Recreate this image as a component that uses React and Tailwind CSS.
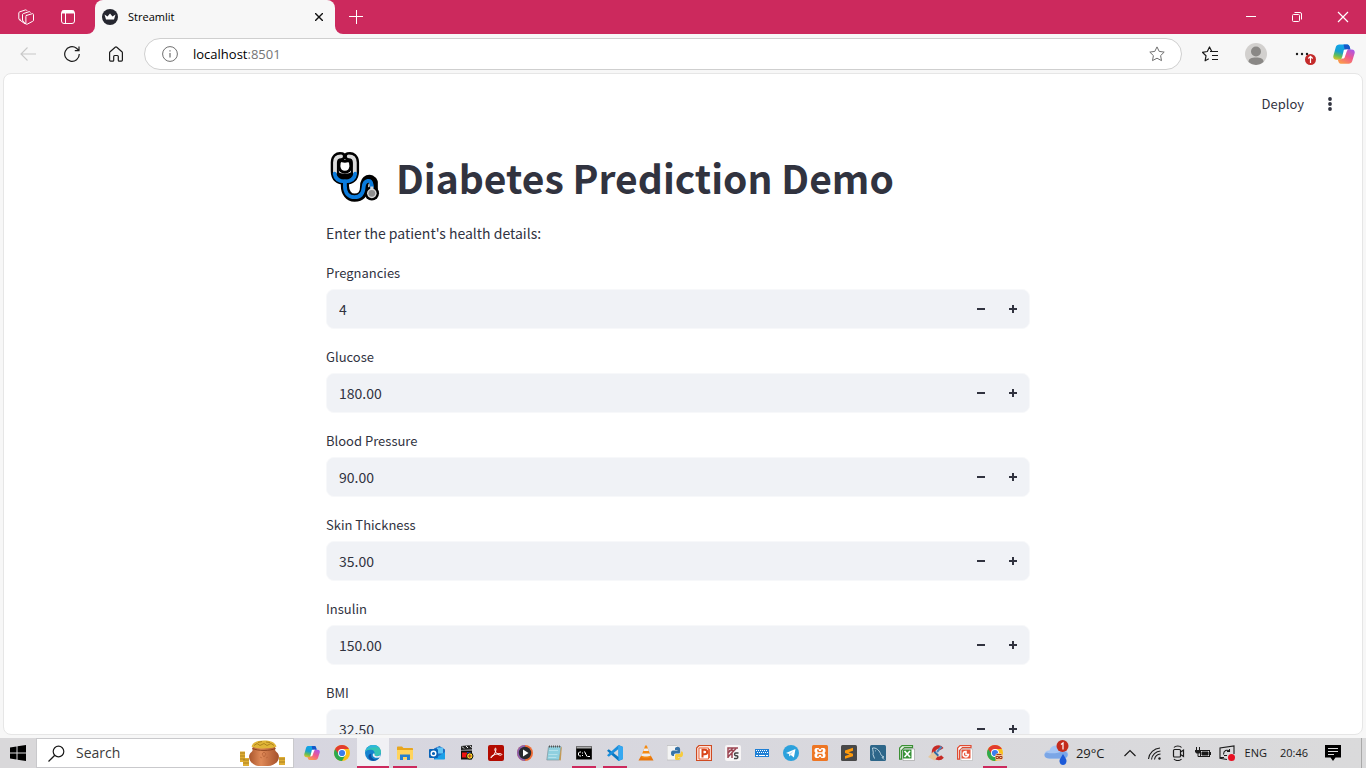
import { useState } from "react";

const UI = "font-['Open_Sans','Noto_Sans',sans-serif]";
const APP = "font-['Noto_Sans_CJK_SC','Open_Sans',sans-serif]";

const FIELDS = [
  { id: "pregnancies", label: "Pregnancies", start: 4, digits: 0 },
  { id: "glucose", label: "Glucose", start: 180, digits: 2 },
  { id: "blood-pressure", label: "Blood Pressure", start: 90, digits: 2 },
  { id: "skin-thickness", label: "Skin Thickness", start: 35, digits: 2 },
  { id: "insulin", label: "Insulin", start: 150, digits: 2 },
  { id: "bmi", label: "BMI", start: 32.5, digits: 2 },
];

function Svg({ size = "size-4", box = 16, children, ...rest }) {
  return (
    <svg className={`${size} shrink-0`} viewBox={`0 0 ${box} ${box}`} fill="none" aria-hidden="true" {...rest}>
      {children}
    </svg>
  );
}

function CopilotLogo({ size, id }) {
  return (
    <Svg size={size} box={24}>
      <defs>
        <linearGradient id={`${id}a`} x1="8" y1="1" x2="3" y2="19" gradientUnits="userSpaceOnUse">
          <stop stopColor="#12a5ee" />
          <stop offset=".45" stopColor="#15a0d0" />
          <stop offset=".7" stopColor="#62bd58" />
          <stop offset="1" stopColor="#f7c51f" />
        </linearGradient>
        <linearGradient id={`${id}b`} x1="20" y1="6" x2="11" y2="23" gradientUnits="userSpaceOnUse">
          <stop stopColor="#a557ef" />
          <stop offset=".5" stopColor="#f0588c" />
          <stop offset="1" stopColor="#fb9b4b" />
        </linearGradient>
      </defs>
      <path d="M7 1.500h8.500c1.600 0 2.200 1 2.700 2.600L19 7h-3.500c-1.500 0-2.300.8-2.800 2.400L10.500 16c-.5 1.500-1.200 2.200-2.800 2.200H3.500C.8 18.200-.2 16 .5 13.500L3 4.500c.6-2 1.900-3 4-3z" fill={`url(#${id}a)`} />
      <path d="M11.500 1.500h4c1.600 0 2.200 1 2.700 2.600L19 7h-3.500c-1.200 0-2 .5-2.500 1.600L11.500 1.500z" fill="#1657c8" />
      <path d="M17 22.500H8.500c-1.600 0-2.200-1-2.700-2.600L5.200 18h2.500c1.600 0 2.300-.8 2.800-2.300l2.200-6.600C13.200 7.600 14 7 15.500 7h5c2.700 0 3.700 2 3 4.500L21 19.500c-.6 2-1.900 3-4 3z" fill={`url(#${id}b)`} />
      <path d="M11.800 7.500c1-.6 3-.5 4.700-.3-1 .8-1.500 2-2 3.500l-1.800 5c-.4 1-1.500 1.500-4.200 1.300 1-.5 1.300-1 1.700-2.500z" fill="#fff" />
    </Svg>
  );
}

function Stethoscope() {
  return (
    <svg className="size-[50px] shrink-0" viewBox="0 0 52 52" fill="none" role="img" aria-label="Stethoscope">
      <g strokeLinecap="round" strokeLinejoin="round">
        <path d="M12 4.500C8 3.500 5 6 5 11v9c0 7 4 10 10.500 10S26 27 26 20v-9c0-5-3-7.500-7-6.500" stroke="#000" strokeWidth="8.500" />
        <path d="M15.500 31v4c0 7 4 12.500 10 12.500s10-3 10-11.500 7-11 10-4.500v9" stroke="#000" strokeWidth="8.500" />
        <circle cx="43.500" cy="43" r="7.500" fill="#000" />
        <path d="M11.500 4.500C7.500 4.500 5.200 6.500 5.200 11v10M19.500 4.500c4 0 6.300 2 6.300 6.500v10" stroke="#dcdcdc" strokeWidth="4" />
        <path d="M4.800 22.500c.7 5.500 4.500 8 10.700 8s10-2.500 10.700-8" stroke="#0a7bdc" strokeWidth="4" />
        <path d="M15.500 30.500v5c0 7 4 11.500 10 11.500s9-3.500 9.500-10.500 8-9.500 8.500-1.500v2" stroke="#0a7bdc" strokeWidth="4" />
        <path d="M7.500 20c2.500 2 5 2.500 8 2.500s5.500-.5 8-2.500c0 5.500-2.500 8-8 8s-8-2.500-8-8z" fill="#000" />
        <path d="M11.500 8.500c-2 1.500-2.700 3.500-2.200 6.500.5 4 2.700 6 6.200 6s5.700-2 6.200-6c.4-3-.4-5-2.200-6.500-1.200 1.500-6.800 1.500-8 0z" fill="#fff" stroke="#000" strokeWidth="3" />
      </g>
      <path d="M43.500 36v3" stroke="#d5d5d5" strokeWidth="3" />
      <circle cx="43.500" cy="43" r="5" fill="#d5d5d5" />
      <circle cx="43.500" cy="43" r="3.500" fill="#8f8f8f" />
    </svg>
  );
}

function NumberField({ field }) {
  const [value, setValue] = useState(field.start.toFixed(field.digits));
  const step = field.digits ? 0.01 : 1;
  const shift = (by) => setValue((Number(value) + by).toFixed(field.digits));
  const button = "flex h-full w-8 items-center justify-center";
  return (
    <div className="flex flex-col">
      <label htmlFor={field.id} className="mb-1 text-[13px] leading-6">{field.label}</label>
      <div className="flex h-10 items-center overflow-hidden rounded-lg border border-[#f7f8fa] bg-[#f0f2f6]">
        <input
          id={field.id}
          value={value}
          onChange={(e) => setValue(e.target.value)}
          className="h-full min-w-0 flex-1 bg-transparent px-3 text-sm outline-none"
        />
        <button type="button" aria-label={`Decrease ${field.label}`} className={button} onClick={() => shift(-step)}>
          <Svg size="size-2" box={8}><path d="M0 4h8" stroke="#31333f" strokeWidth="2" /></Svg>
        </button>
        <button type="button" aria-label={`Increase ${field.label}`} className={button} onClick={() => shift(step)}>
          <Svg size="size-2" box={8}><path d="M0 4h8M4 0v8" stroke="#31333f" strokeWidth="2" /></Svg>
        </button>
      </div>
    </div>
  );
}

function TitleBar() {
  return (
    <header className="flex h-[34px] shrink-0 bg-[#cc295d] text-white">
      <div className="flex w-[95px] shrink-0 items-center bg-[#f7f7f7]">
        <div className="flex h-full w-full items-center gap-[26px] rounded-br-lg bg-[#cc295d] pl-[18px]">
          <button type="button" aria-label="Workspaces">
            <Svg stroke="#fff" strokeLinejoin="round" strokeLinecap="round">
              <path d="M8.300 6.500l6-1.800c.8-.2 1.200.2 1.200.9v5.600c0 .6-.2.900-.8 1.100l-5.500 2.900c-.8.300-1.300 0-1.300-.7V7.600c0-.6 0-.9.400-1.100z" />
              <path d="M5.700 12.300c-.8.200-1.200-.1-1.200-.7V5.700c0-.6.200-.9.800-1.100L11 2.700c.7-.2 1.100 0 1.300.6" />
              <path d="M2.300 10.300c-1 .2-1.500-.1-1.500-.8V4c0-.6.200-.9.800-1.100L7.500.9c.7-.2 1.100 0 1.300.6M1 10.500l6 4.300M4.700 12.200l3 2.500" />
            </Svg>
          </button>
          <button type="button" aria-label="Tab actions">
            <Svg stroke="#fff">
              <rect x="1.500" y="1.500" width="13" height="13" rx="2.500" />
              <path d="M2 3h12" strokeWidth="3" />
              <path d="M5.500 4v10.500" />
            </Svg>
          </button>
        </div>
      </div>
      <div className="w-60 shrink-0 bg-[#cc295d]">
        <div className="flex h-full items-center rounded-t-lg bg-[#f7f7f7] pr-2 pl-[7px] text-black">
          <Svg>
            <circle cx="8" cy="8" r="8" fill="#262730" />
            <path d="M2.500 5.500l3 2L8 4.500l2.500 3 3-2L12 10.500H4z" fill="#fff" />
          </Svg>
          <span className="ml-[10px] flex-1 text-[11px] leading-4">Streamlit</span>
          <button type="button" aria-label="Close tab" className="flex size-4 items-center justify-center">
            <Svg size="size-2" box={8}><path d="M0 0l8 8M8 0L0 8" stroke="#111" strokeWidth="1.400" /></Svg>
          </button>
        </div>
      </div>
      <div className="flex flex-1 items-center bg-[#f7f7f7]">
        <div className="flex h-full flex-1 items-center justify-between rounded-bl-lg bg-[#cc295d] pl-[13px]">
          <button type="button" aria-label="New tab">
            <Svg><path d="M1 7.500h14M8.500 1v14" stroke="#fff" /></Svg>
          </button>
          <div className="flex h-full">
            <button type="button" aria-label="Minimize" className="flex w-[46px] items-center justify-center">
              <Svg size="size-3" box={12}><path d="M1 5.500h10" stroke="#fff" /></Svg>
            </button>
            <button type="button" aria-label="Restore" className="flex w-[46px] items-center justify-center">
              <Svg size="size-3" box={12} stroke="#fff">
                <rect x="1.500" y="3.500" width="7" height="7" rx="1" />
                <path d="M3.500 1.500h5.500a1.500 1.500 0 0 1 1.500 1.500v5.500" />
              </Svg>
            </button>
            <button type="button" aria-label="Close" className="flex w-[46px] items-center justify-center">
              <Svg size="size-3" box={12}><path d="M1 1l10 10M11 1L1 11" stroke="#fff" strokeWidth="1.200" /></Svg>
            </button>
          </div>
        </div>
      </div>
    </header>
  );
}

function Toolbar() {
  return (
    <nav aria-label="Browser" className="flex h-[39px] shrink-0 items-center pr-[11px] pl-5">
      <button type="button" aria-label="Back">
        <Svg><path d="M16 8H.8M7.500 1.500L1 8l6.500 6.500" stroke="#c8c8c8" strokeWidth="1.100" /></Svg>
      </button>
      <button type="button" aria-label="Reload" className="ml-7">
        <Svg><path d="M15.300 8A7.300 7.300 0 1 1 12.500 2.300L15 4.500M15 .5v4.200h-4.200" stroke="#1b1b1b" strokeWidth="1.200" /></Svg>
      </button>
      <button type="button" aria-label="Home" className="ml-7">
        <Svg>
          <path d="M1.600 6.800c0-.5.200-.8.500-1.100L7.200 1.200c.5-.4 1.100-.4 1.600 0l5.100 4.500c.3.300.5.600.5 1.100v7.300c0 .6-.4 1-1 1h-2.200c-.5 0-.9-.4-.9-.9V10.500c0-.6-.4-1-1-1H6.700c-.6 0-1 .4-1 1v3.700c0 .5-.4.900-.9.900H2.600c-.6 0-1-.4-1-1z" stroke="#1b1b1b" strokeWidth="1.200" />
        </Svg>
      </button>
      <div className="ml-5 flex h-8 min-w-0 flex-1 items-center rounded-full border border-[#cfcfcf] bg-white px-4">
        <Svg className="ml-px size-4 shrink-0">
          <circle cx="8" cy="8" r="7.400" stroke="#6f6f6f" />
          <path d="M8 7v4.500M8 4.200v1.300" stroke="#6f6f6f" strokeWidth="1.200" />
        </Svg>
        <a href="http://localhost:8501" className="ml-[15px] flex-1 text-[13px] leading-5 text-black">
          localhost<span className="text-[#757575]">:8501</span>
        </a>
        <button type="button" aria-label="Add to favorites">
          <Svg><path d="M8 .9l2.200 4.500 5 .7-3.600 3.500.9 5L8 12.200l-4.500 2.400.9-5L.8 6.100l5-.7z" stroke="#6f6f6f" strokeLinejoin="round" /></Svg>
        </button>
      </div>
      <button type="button" aria-label="Favorites" className="ml-5">
        <Svg><path d="M15 5.500H9.800L7.500 1 5.300 5.500l-5 .8L4 9.800l-.9 5 3.700-2M8 5.500h8M10 9.500h6M10 13.500h6" stroke="#1b1b1b" strokeWidth="1.200" strokeLinejoin="round" /></Svg>
      </button>
      <button type="button" aria-label="Profile" className="ml-[27px]">
        <Svg size="size-[22px]" box={22}>
          <circle cx="11" cy="11" r="11" fill="#d2d0ce" />
          <circle cx="11" cy="8.500" r="5" fill="#8a8886" />
          <path d="M3.500 19c0-3.500 3-4.500 7.500-4.500s7.500 1 7.500 4.500A11 11 0 0 1 3.500 19z" fill="#8a8886" />
        </Svg>
      </button>
      <button type="button" aria-label="Settings and more" className="ml-7">
        <Svg size="size-[22px]" box={22}>
          <g fill="#1b1b1b"><circle cx="2" cy="11" r="1.200" /><circle cx="7" cy="11" r="1.200" /><circle cx="12" cy="11" r="1.200" /></g>
          <circle cx="15.500" cy="16.500" r="5.500" fill="#c42b2b" />
          <path d="M15.500 20v-6.500M13.300 15.500l2.200-2.200 2.200 2.200" stroke="#fff" strokeWidth="1.200" />
        </Svg>
      </button>
      <button type="button" aria-label="Copilot" className="ml-4">
        <CopilotLogo size="size-[22px]" id="bar" />
      </button>
    </nav>
  );
}

function Page() {
  return (
    <main className={`${APP} min-h-0 flex-1 overflow-hidden rounded-lg border border-[#e6e6e6] bg-white text-[#31333f]`}>
      <div className="flex h-[59px] items-center justify-end gap-[18px] pr-6">
        <button type="button" className="text-[13px] leading-6">Deploy</button>
        <button type="button" aria-label="Main menu">
          <Svg><g fill="#31333f"><circle cx="8" cy="3" r="1.900" /><circle cx="8" cy="8" r="1.900" /><circle cx="8" cy="13" r="1.900" /></g></Svg>
        </button>
      </div>
      <div className="pr-[10px]">
        <div className="mx-auto flex w-full max-w-[704px] flex-col pt-4">
          <h1 className="flex items-center gap-4 pl-1 text-[39px] leading-[56px] font-bold">
            <Stethoscope />
            Diabetes Prediction Demo
          </h1>
          <p className="mt-4 text-sm leading-6">Enter the patient's health details:</p>
          <form className="mt-4 flex flex-col gap-4" onSubmit={(e) => e.preventDefault()}>
            {FIELDS.map((f) => <NumberField key={f.id} field={f} />)}
          </form>
        </div>
      </div>
    </main>
  );
}

const chrome = (
  <>
    <circle cx="8" cy="8" r="8" fill="#fbc116" />
    <path d="M1.100 4A8 8 0 0 0 8 16l3.500-6L8 8z" fill="#2da94f" />
    <path d="M8 4h6.900A8 8 0 0 0 1.100 4l3.500 5z" fill="#e33b2e" />
    <circle cx="8" cy="8" r="4" fill="#fff" />
    <circle cx="8" cy="8" r="3.100" fill="#3b7ded" />
  </>
);

const APPS = [
  { name: "Google Chrome", slot: "w-[31px]", art: chrome },
  {
    name: "Microsoft Edge", slot: "w-8 bg-[#f0f0f4]", line: "w-8",
    art: (
      <>
        <circle cx="8" cy="8" r="8" fill="#1583cf" />
        <path d="M.3 6.500C1.500 2.500 4.500 0 8.300 0 13 0 16 3.500 16 7c0 2.500-2 4-4.200 4-1.800 0-2.600-.7-2.300-1.500.5-1 .3-4.200-3.200-4.700C3.500 4.400 1.200 5.500.3 6.500z" fill="#35c3b5" />
        <path d="M.3 6.500C1.500 2.500 4.500 0 8.300 0c2.700 0 4.700 1.100 6 2.700C10 1.500 3 2.500.3 6.500z" fill="#2fb6dc" />
        <path d="M6.500 8.500c-1.500 3 1.500 6.500 5 6l2.700-1.700C12 16 7.500 16.500 5 14.500s-2-5.500 1.500-6z" fill="#0c4fa0" />
        <path d="M9.700 9c-.8 1.300.3 2.200 2.300 2.200 1.700 0 2.900-.7 3.500-1.700l-.8 2.700c-3 1.500-7 .3-7-2.200 0-1.200 1-2 2-1z" fill="#f0f0f4" />
      </>
    ),
  },
  {
    name: "File Explorer", slot: "w-8", line: "w-6",
    art: (
      <>
        <path d="M0 2.500C0 2 .4 1.500 1 1.500h4l1.500 1.500H15c.6 0 1 .4 1 1V14H0z" fill="#e8a61e" />
        <path d="M0 5h16v9.500H0z" fill="#ffd45c" />
        <path d="M3 15V9.500h10V15h-3v-3H6v3z" fill="#2580cf" />
      </>
    ),
  },
  {
    name: "Outlook", slot: "w-[31px]",
    art: (
      <>
        <path d="M5 3.500L10.500 1 16 4.500V14H5z" fill="#1f6fc4" />
        <path d="M8 2.500h6v6H8z" fill="#62c5f5" />
        <path d="M5 14l11-7v6.500c0 .8-.4 1-1 1H5z" fill="#1aa0e8" />
        <rect y="4" width="9" height="9" rx="1" fill="#0a64b8" />
        <circle cx="4.500" cy="8.500" r="2.300" stroke="#fff" strokeWidth="1.400" />
      </>
    ),
  },
  {
    name: "Media Player Classic", slot: "w-[29px]",
    art: (
      <>
        <path d="M2 1l11-1v4.500L2 5z" fill="#222" />
        <path d="M3 1.500l2 2M7 1l2 2M11 .700l1.500 2" stroke="#eee" strokeWidth="1" />
        <path d="M2 5.500h11v9H2z" fill="#111" />
        <path d="M3 7.500h5v5H3z" fill="#e11" />
        <path d="M8 7h4v5H8z" fill="#1539c8" />
        <circle cx="10.800" cy="11" r="3.200" fill="#ffe52b" stroke="#111" />
        <path d="M9 11h3.600M10.800 9.200v3.600" stroke="#b3261e" />
      </>
    ),
  },
  {
    name: "Acrobat Reader", slot: "w-[29px]",
    art: (
      <>
        <rect width="16" height="16" rx="2" fill="#b30b00" />
        <path d="M3 12.700c2-1 5-5 5-8.700 0-1.200-1.300-1-1.200.3.200 3 3.500 6.500 6.500 5.800.9-.3.500-1.500-1-1.500-3.300 0-6 .9-8.500 2.400-1.200.8-1 1.900-.8 1.700z" stroke="#fff" strokeWidth="1" />
      </>
    ),
  },
  {
    name: "Media Player", slot: "w-[29px]",
    art: (
      <>
        <circle cx="8" cy="8" r="8" fill="#ef6c35" />
        <path d="M8 0a8 8 0 0 0 0 16z" fill="#8d62b0" />
        <circle cx="8" cy="8" r="6.200" fill="#2a2a2e" />
        <path d="M6 4.500L11.500 8 6 11.500z" fill="#fff" />
      </>
    ),
  },
  {
    name: "Notepad", slot: "w-[29px]",
    art: (
      <>
        <path d="M2.500 1.500H15L13.500 15H.8z" fill="#8fd0df" stroke="#738b91" strokeWidth=".6" />
        <path d="M13 15l2-13 .8.500-1 13z" fill="#c49a55" />
        <path d="M3 5.500h9M2.500 9.500h9M2.300 12.500h8" stroke="#b5e1ea" />
        <path d="M3 1.500h12" stroke="#555" strokeWidth="2" strokeDasharray="1 1" />
      </>
    ),
  },
  {
    name: "Command Prompt", slot: "w-[31px]", line: "w-6",
    art: (
      <>
        <path d="M0 1.500h16v13H0z" fill="#000" stroke="#777" strokeWidth=".6" />
        <path d="M.5 2h15v1.500H.5z" fill="#aaa" />
        <path d="M5 7H3.500L2.500 8v2l1 1H5M6.500 7.500v1M6.500 10v1M8.500 6.500l2.500 5M11.500 11.500H14" stroke="#fff" />
      </>
    ),
  },
  {
    name: "Visual Studio Code", slot: "w-8", line: "w-6",
    art: (
      <>
        <path d="M11.500 0L16 2v12l-4.500 2L0 5.800l1.800-1.500L11.500 12z" fill="#0a78c2" />
        <path d="M11.500 0L0 10.200l1.800 1.500L11.500 4z" fill="#1a8fdd" />
        <path d="M11.500 0L16 2v12l-4.500 2z" fill="#35a8f1" />
      </>
    ),
  },
  {
    name: "VLC", slot: "w-[29px]",
    art: (
      <>
        <path d="M3 11h10l2.500 4.500h-15z" fill="#e8760c" />
        <path d="M7.200.5h1.600L13 12c-2 1.700-8 1.700-10 0z" fill="#f58b12" />
        <path d="M6.200 3.500h3.600l.9 2.500H5.300zM4.300 8.500h7.300l.8 2.300c-2 1-7 1-9 0z" fill="#eee" />
      </>
    ),
  },
  {
    name: "Python", slot: "w-[29px]",
    art: (
      <>
        <path d="M0 .5h9.500L13 4v11H0z" fill="#f4f4f4" stroke="#aaa" strokeWidth=".5" />
        <path d="M8 3.500c0-1 1-1.500 2.500-1.500S13 2.500 13 3.500V7c0 1-.5 1.500-1.500 1.500h-3C7.300 8.500 7 9.300 7 11H6c-1.300 0-2-1-2-2.700S4.700 5.500 6 5.500h4.500V5H8z" fill="#3874a8" />
        <path d="M13 13.500c0 1-1 1.500-2.500 1.500S8 14.500 8 13.500v-3c0-.8.500-1.500 1.500-1.500h3c1 0 1.500-.8 1.500-2.500h.8c1 0 1.200 1 1.200 2.500s-.5 3-1.700 3H11v.5h2z" fill="#f7cc3d" />
      </>
    ),
  },
  {
    name: "PowerPoint", slot: "w-[29px]",
    art: (
      <>
        <path d="M3 .5h12.500v15H.5V3z" fill="#fbe3da" stroke="#cf4a21" strokeWidth="1.200" />
        <path d="M3 3h9.500v11H3z" fill="#fff" stroke="#e8623a" />
        <path d="M6.500 12.500V4.800h2c3.600 0 3.600 4.400 0 4.400h-2" stroke="#d8441a" strokeWidth="2" />
        <path d="M13.500 4v9" stroke="#e8623a" />
      </>
    ),
  },
  {
    name: "KeyScrambler", slot: "w-[29px]",
    art: (
      <>
        <rect width="16" height="16" rx="2" fill="#f7f5f6" />
        <path d="M3 13V3h10M3 8l5-5M3 12l8-8.500M7 8v5M4 5.500h5" stroke="#9c4553" strokeWidth="1.500" />
        <path d="M13.500 8h-2.800c-1.500 0-1.500 2.700 0 2.700h1c1.500 0 1.500 2.800 0 2.800H9" stroke="#444" strokeWidth="1.500" />
      </>
    ),
  },
  {
    name: "On-Screen Keyboard", slot: "w-[29px]",
    art: (
      <>
        <path d="M1 4h14v8H1z" fill="#1f7fd4" />
        <path d="M2 5.500h12M3 7.500h11" stroke="#fff" strokeDasharray="1 1" />
        <path d="M2 10.500h2M5 10.500h6M12 10.500h2" stroke="#fff" />
      </>
    ),
  },
  {
    name: "Telegram", slot: "w-[29px]",
    art: (
      <>
        <circle cx="8" cy="8" r="8" fill="#2ca1dc" />
        <path d="M3 8l9.500-4-1.600 8.500L7.800 10l-1.500 1.500L6 9z" fill="#fff" />
        <path d="M6 9l5-3.500L7.500 9.700" fill="#b7dcf0" />
      </>
    ),
  },
  {
    name: "XAMPP", slot: "w-[29px]",
    art: (
      <>
        <rect width="16" height="16" rx="1.500" fill="#ee7623" />
        <path d="M4.500 3h2L8 4.500 9.500 3h2C13 3 13.500 4 13.500 5.500v1L12.500 8l1 1.500v1c0 1.500-.5 2.500-2 2.500h-2L8 11.500 6.500 13h-2c-1.500 0-2-1-2-2.500v-1l1-1.500-1-1.500v-1C2.500 4 3 3 4.500 3z" fill="#fff" />
        <path d="M5 5.200h1.200v1.500h3.600V5.200H11M5 10.800h1.200V9.300h3.600v1.500H11" stroke="#ee7623" strokeWidth="1.300" />
      </>
    ),
  },
  {
    name: "Sublime Text", slot: "w-[29px]",
    art: (
      <>
        <rect width="16" height="16" rx="1.500" fill="#484848" />
        <path d="M4 5.500l8-2.700v3L7.500 7.300 12 8.700v2.500l-8 2.600v-2.900l4.500-1.500L4 8z" fill="#ff9a0b" />
      </>
    ),
  },
  {
    name: "MySQL Workbench", slot: "w-[29px]",
    art: (
      <>
        <rect width="16" height="16" rx="1.500" fill="#2d6689" />
        <path d="M4.500 13.500L3 9.500c.8-2-.5-5-.5-6.500C6 2.500 9 5 10.500 8.500c.5 2 2 3 3.500 3.500-1 .2-1.500.2-2 .4l2 2.100M5.500 5.500v.8" stroke="#c6dce8" strokeWidth=".9" />
      </>
    ),
  },
  {
    name: "Excel", slot: "w-[29px]",
    art: (
      <>
        <path d="M3 .6h10.500v2H5.500l-3 3v8.500H.6V3z" fill="#e9f5e8" stroke="#3b8f35" strokeWidth="1.200" />
        <path d="M4 4h11.500v11.500H4z" fill="#fff" stroke="#888" strokeWidth=".5" />
        <path d="M4 4.500h8.500v9H4z" fill="#379338" />
        <path d="M5.500 6l5.500 6M11 6l-5.500 6" stroke="#fff" strokeWidth="1.700" />
      </>
    ),
  },
  {
    name: "CCleaner", slot: "w-[29px]",
    art: (
      <>
        <path d="M14 4C12 .8 5.500 1.500 5.500 7.500s6 7.500 9 4" stroke="#c62a25" strokeWidth="3.600" />
        <path d="M13.500 1.500L9 7" stroke="#4c86bd" strokeWidth="2" />
        <path d="M5.500 6.500l4.500 4.500-3.500 4.500L0 12z" fill="#e6c79d" />
        <path d="M7 6l4 4-1.300 1.500-4-4z" fill="#2e6aa5" />
      </>
    ),
  },
  {
    name: "PowerPoint Viewer", slot: "w-[29px]",
    art: (
      <>
        <path d="M3 .6h11v2H5.500l-3 3v8.500H.6V3z" fill="#fff" stroke="#df4b32" strokeWidth="1.200" />
        <path d="M4 4h11.500v11.500H4z" fill="#fff" stroke="#aaa" strokeWidth=".5" />
        <path d="M4.500 4.500h9v9h-9z" fill="#e6553b" />
        <path d="M11.500 9.500A2.700 2.700 0 1 1 9 6.500v3z" stroke="#fff" strokeWidth="1.500" />
      </>
    ),
  },
  {
    name: "Chrome profile", slot: "w-[31px]", line: "w-6",
    art: (
      <>
        {chrome}
        <circle cx="12" cy="12" r="4" fill="#f4c99b" />
        <path d="M9 11.500h2.500v2H9zM12.500 11.500H15v2h-2.500zM9.500 9.500h5" stroke="#a33b1c" />
      </>
    ),
  },
];

function TaskApp({ app }) {
  return (
    <button type="button" aria-label={app.name} className={`relative flex h-full shrink-0 items-center justify-center ${app.slot}`}>
      <Svg>{app.art}</Svg>
      {app.line && <span className={`absolute bottom-0 h-[2px] bg-[#cc295d] ${app.line}`} />}
    </button>
  );
}

function PotOfGold() {
  return (
    <svg className="h-[27px] w-12 shrink-0" viewBox="0 0 48 27" fill="none" aria-hidden="true">
      <defs>
        <linearGradient id="pot" x1="10" y1="0" x2="40" y2="0" gradientUnits="userSpaceOnUse">
          <stop stopColor="#a9562c" /><stop offset=".4" stopColor="#e08a58" /><stop offset="1" stopColor="#a4502a" />
        </linearGradient>
      </defs>
      <path d="M1 11.500h5V22H1zM4 18h6v8H4zM40 17h6v8h-6z" fill="#dfae35" />
      <path d="M1 13h5M1 16h5M1 19h5M4 20h6M4 23h6M40 19h6M40 22h6" stroke="#8d6413" strokeWidth=".6" />
      <path d="M14 7c-2 2 1 3-1.500 5-6 5 0 14 8.500 14h8c8.500 0 14.500-9 8.500-14C35 10 37 9 36 7z" fill="url(#pot)" />
      <path d="M13.500 8.500c5 2.500 18 2.500 23 0" stroke="#8c4320" />
      <path d="M12.500 6.500C14 2 19 .5 25 .5S36 2 37.500 6.500c-4 2.500-21 2.500-25 0z" fill="#e0b537" />
      <path d="M15 5.500l3-2 3 2 4-2 3 2 4-2 3 2M19 2.500l4-1M27 2l4 .5" stroke="#9b6e12" strokeWidth=".7" />
      <path d="M23 14l2-2 2 2-2 3zM21 17l2 1M29 17l-2 1" stroke="#b9643a" strokeWidth=".8" />
    </svg>
  );
}

function Taskbar() {
  return (
    <footer className="flex h-[30px] shrink-0 items-center bg-linear-to-r from-[#d6d5e1] to-[#dadadb] text-[#1b1b1b]">
      <button type="button" aria-label="Start" className="flex h-full w-9 shrink-0 items-center justify-center bg-[#d9d8da]">
        <Svg><path d="M0 2.500L6.500 1.500V7.500H0zM7.500 1.300L16 0v7.500H7.500zM0 8.500h6.500v6L0 13.500zM7.500 8.500H16V16l-8.500-1.300z" fill="#000" /></Svg>
      </button>
      <label className="flex h-full w-[258px] shrink-0 items-center border border-[#c9c9cc] bg-white pr-[6px] pl-[11px]">
        <Svg size="size-[17px]" box={17}><circle cx="10.500" cy="6.500" r="5.300" stroke="#1b1b1b" strokeWidth="1.200" /><path d="M6.800 10.300L.5 16.500" stroke="#1b1b1b" strokeWidth="1.300" /></Svg>
        <input aria-label="Search" placeholder="Search" className="ml-[11px] min-w-0 flex-1 bg-transparent text-[14px] leading-5 outline-none placeholder:text-[#3b3b3b]" />
        <PotOfGold />
      </label>
      <div className="flex h-full flex-1 items-center pl-[3px]">
        <button type="button" aria-label="Copilot" className="flex h-full w-[29px] shrink-0 items-center justify-center">
          <CopilotLogo size="size-4" id="task" />
        </button>
        {APPS.map((a) => <TaskApp key={a.name} app={a} />)}
      </div>
      <div className="flex h-full shrink-0 items-center">
        <svg className="h-[26px] w-[26px]" viewBox="0 0 26 26" fill="none" aria-hidden="true">
          <path d="M5.500 18.500c-7 0-6.500-8 0-8C7 4.500 16 3.500 18 10c8-.5 8 8.500 1.500 8.500z" fill="#a6c6f4" />
          <path d="M5.500 18.500c-6 0-6-5-3-6 6 2 12 0 17-1 6 0 5 7 0 7z" fill="#7ba6e6" />
          <path d="M19 14l3 5c1.500 3-.5 6-3 6s-4.500-3-3-6z" fill="#1b59d8" />
          <circle cx="18.500" cy="6" r="6" fill="#c42b1c" />
          <path d="M17 4.500l2-1.500v6.500" stroke="#fff" strokeWidth="1.200" />
        </svg>
        <span className="ml-[6px] text-[13px] leading-5">29°C</span>
        <button type="button" aria-label="Show hidden icons" className="ml-[18px]">
          <Svg size="size-[14px]" box={14}><path d="M1.500 10L7 4.500l5.500 5.500" stroke="#1b1b1b" strokeWidth="1.200" /></Svg>
        </button>
        <div className="ml-[10px] flex items-center gap-[8px]">
          <Svg stroke="#1b1b1b">
            <path d="M1.500 14A12.500 12.500 0 0 1 13 3M4.500 14.500A9.500 9.500 0 0 1 13.500 6M7.500 14.500A6.500 6.500 0 0 1 13.500 9" strokeWidth="1.100" />
            <circle cx="12.500" cy="13.500" r="1.200" fill="#1b1b1b" stroke="none" />
          </Svg>
          <Svg stroke="#1b1b1b" strokeWidth="1.200">
            <rect x="2.500" y="4.500" width="7" height="7.500" rx="1" /><path d="M9.500 7l3-2v6.500l-3-2M3 2.500c1.500-2 6-2 7.500 0M3 14c1.500 2 6 2 7.500 0" />
          </Svg>
          <Svg stroke="#1b1b1b">
            <path d="M1.500 2v3M4.500 2v3" /><path d="M0 5h6v2L4.500 8.500h-3L0 7z" fill="#1b1b1b" stroke="none" /><path d="M3 8v3.500h2" />
            <rect x="5.500" y="5.500" width="9" height="6" /><path d="M7 7h6v3H7z" fill="#1b1b1b" /><path d="M15.500 7v3" />
          </Svg>
          <Svg stroke="#1b1b1b" strokeWidth="1.100">
            <path d="M8 14.500l-7-1.200V3l14-2v8M5 12.500H1" />
            <path d="M4.500 9.500c0-4 3.500-5.500 6-3M10.500 4v2.500H8M5 10.500h3" />
            <circle cx="12.500" cy="12.500" r="3.500" fill="#e81123" stroke="none" />
          </Svg>
        </div>
        <span className="ml-[10px] text-[11px] leading-5">ENG</span>
        <span className="ml-[13px] text-[11px] leading-5">20:46</span>
        <button type="button" aria-label="Notifications" className="ml-[17px]">
          <Svg><path d="M0 0h16v12.500h-5.500L8 16l-2.500-3.500H0z" fill="#000" /><path d="M3 3.500h10M3 6.500h10M3 9.500h6" stroke="#ddd" /></Svg>
        </button>
        <span className="ml-5 h-full w-[5px] border-l border-[#a9a9a9]" />
      </div>
    </footer>
  );
}

export default function App() {
  return (
    <div className={`${UI} flex h-screen flex-col overflow-hidden bg-[#f7f7f7]`}>
      <TitleBar />
      <Toolbar />
      <div className="flex min-h-0 flex-1 flex-col px-[3px] pb-[3px]">
        <Page />
      </div>
      <Taskbar />
    </div>
  );
}
